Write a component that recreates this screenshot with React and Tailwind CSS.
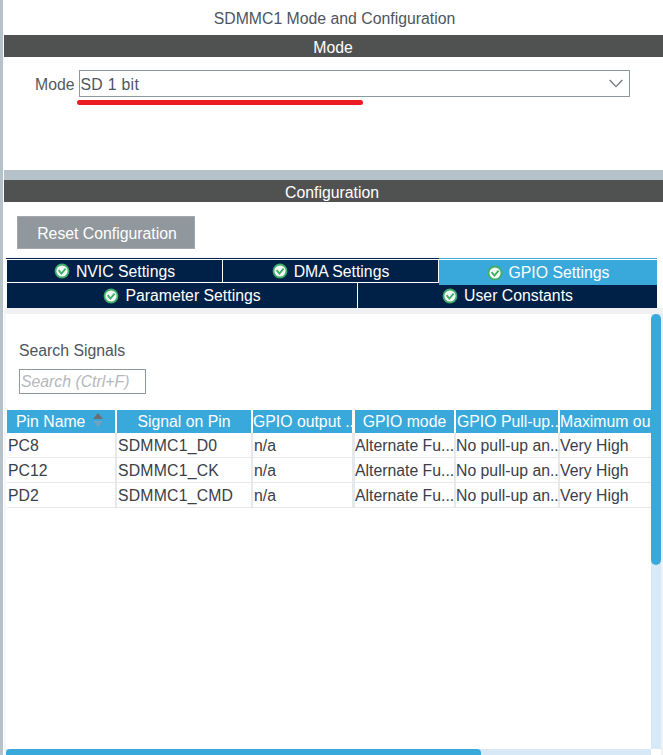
const FONT = "font-['Liberation_Sans',Arial,sans-serif]";

function Check() {
  return (
    <svg width="16" height="16" viewBox="0 0 16 16" className="shrink-0">
      <circle cx="8" cy="8" r="7.4" fill="#3fae6a" />
      <circle cx="8" cy="8" r="5.6" fill="#f6faf7" />
      <path d="M4.6 7.2 L7.4 10.6 L11.6 5.6" fill="none" stroke="#3fae6a" strokeWidth="1.9" />
    </svg>
  );
}

function Tab({ label, className, textClass }) {
  return (
    <div className={`flex items-center justify-center gap-[6px] text-white ${className}`}>
      <Check />
      <span className={textClass}>{label}</span>
    </div>
  );
}

const cols = [
  { w: "w-[108px]", gap: "mr-[2px]", label: "Pin Name", head: "justify-start pl-[9px]", cell: "pl-[1px]" },
  { w: "w-[134px]", gap: "mr-[2px]", label: "Signal on Pin", head: "justify-center", cell: "pl-[1px] tracking-[0.2px]" },
  { w: "w-[99px]", gap: "mr-[3px]", label: "GPIO output ...", head: "justify-start", cell: "pl-[1px]" },
  { w: "w-[99px]", gap: "mr-[2px]", label: "GPIO mode", head: "justify-center", cell: "" },
  { w: "w-[102px]", gap: "mr-[2px]", label: "GPIO Pull-up...", head: "justify-start pl-[1px]", cell: "" },
  { w: "w-[91px]", gap: "", label: "Maximum ou...", head: "justify-start", cell: "" },
];

const rows = [
  ["PC8", "SDMMC1_D0"],
  ["PC12", "SDMMC1_CK"],
  ["PD2", "SDMMC1_CMD"],
];

export default function App() {
  return (
    <div className={`${FONT} relative flex h-[755px] w-[663px] overflow-hidden bg-white text-[15.8px] leading-none text-[#3b4048]`}>
      <div className="mr-[1px] w-[3px] shrink-0 bg-[#b6c2c9]" />
      <div className="flex w-[659px] flex-col">
        <div className="flex h-[35px] shrink-0 items-center justify-center pl-[2px] pt-[2px] text-[#4d5560]">SDMMC1 Mode and Configuration</div>
        <div className="flex h-[22px] shrink-0 items-center justify-center bg-[#505251] pr-[1px] pt-[3px] text-white">Mode</div>
        <div className="relative h-[113px] shrink-0">
          <div className="flex items-center pl-[31px] pt-[13px]">
            <span className="mr-[4px] pt-[2px] text-[#56585c]">Mode</span>
            <div className="flex h-[27px] w-[551px] items-center justify-between border border-[#90979d] pl-[1px] pr-[6px] text-[#4d5560]">
              <span className="pt-[2px] tracking-[0.3px]">SD 1 bit</span>
              <svg width="14" height="9" viewBox="0 0 14 9">
                <path d="M0.7 1 L7 7.6 L13.3 1" fill="none" stroke="#70767c" strokeWidth="1.3" />
              </svg>
            </div>
          </div>
          <div className="absolute left-[73px] top-[43px] h-[5px] w-[286px] rounded-full bg-[#ed1c24]" />
        </div>
        <div className="h-[10px] shrink-0 bg-[#b6c2c9]" />
        <div className="flex h-[22px] shrink-0 items-center justify-center bg-[#505251] pr-[3px] pt-[3px] text-white">Configuration</div>
        <div className="shrink-0 pl-[13px] pt-[14px]">
          <div className="flex h-[33px] w-[178px] items-center justify-center border border-[#a2a8ad] bg-[#90979d] pl-[2px] pt-[2px] text-white">Reset Configuration</div>
        </div>
        <div className="mt-[9px] flex h-[1px] w-[653px] shrink-0 pl-[2px]">
          <div className="w-[433px] bg-[#002147]" />
          <div className="w-[218px] bg-[#39a9dc]" />
        </div>
        <div className="ml-[3px] mt-[1px] w-[650px] shrink-0">
          <div className="relative z-10 flex h-[23px] border-b border-white bg-[#002147]">
            <Tab label="NVIC Settings" className="w-[216px] border-r border-white" textClass="pt-[2px]" />
            <Tab label="DMA Settings" className="w-[216px] border-r border-white" textClass="pt-[2px]" />
            <Tab label="GPIO Settings" className="-mb-[3px] w-[218px] bg-[#39a9dc]" textClass="pt-[1px]" />
          </div>
          <div className="flex h-[25px] bg-[#002147]">
            <Tab label="Parameter Settings" className="w-[351px] border-r border-white" textClass="pt-[1px]" />
            <Tab label="User Constants" className="w-[299px]" textClass="pt-[1px]" />
          </div>
        </div>
        <div className="flex min-h-0 flex-1 flex-col border-l-2 border-t-[6px] border-l-[#f5f6f8] border-t-[#eff1f3]">
          <div className="pl-[13px] pt-[29px] text-[#4d5560]">Search Signals</div>
          <div className="ml-[13px] mt-[10px] flex h-[25px] w-[127px] items-center border border-[#90979d] pl-[1px] pt-[2px] italic text-[#b4b8bc]">Search (Ctrl+F)</div>
          <div className="ml-[1px] mt-[16px] flex h-[23px] w-[644px] overflow-hidden">
            {cols.map(({ w, gap, label, head }, i) => (
              <div key={label} className={`${w} ${gap} ${head} relative flex shrink-0 items-center whitespace-nowrap bg-[#39a9dc] pt-[2px] text-white`}>
                {label}
                {i === 0 && (
                  <svg width="12" height="14" viewBox="0 0 12 14" className="absolute left-[85px] top-[3px]">
                    <path d="M6 0 L11 6 L1 6 Z" fill="#6b6e72" />
                    <path d="M1 8 L11 8 L6 14 Z" fill="#6fa3bf" />
                  </svg>
                )}
              </div>
            ))}
          </div>
          {rows.map(([pin, signal]) => (
            <div key={pin} className="ml-[1px] flex h-[25px] w-[644px] bg-[#e6e8eb] pb-[1px] text-[#3b4048]">
              {[pin, signal, "n/a", "Alternate Fu...", "No pull-up an...", "Very High"].map((t, i) => (
                <div key={i} className={`${cols[i].w} ${cols[i].gap} ${cols[i].cell} flex shrink-0 items-center whitespace-nowrap bg-white pt-[2px]`}>{t}</div>
              ))}
            </div>
          ))}
        </div>
      </div>
      <div className="absolute bottom-[6px] right-[2px] top-[314px] w-[10px] bg-[#d7e8f6]">
        <div className="h-[251px] rounded-[5px] bg-[#39a9dc]" />
      </div>
      <div className="absolute bottom-0 left-[6px] h-[6px] w-[645px] bg-[#d7e8f6]">
        <div className="h-full w-[475px] rounded-tl-[4px] rounded-tr-[4px] bg-[#39a9dc]" />
      </div>
      <div className="absolute bottom-0 right-0 top-[308px] w-[2px] bg-[#eff1f3]" />
    </div>
  );
}
